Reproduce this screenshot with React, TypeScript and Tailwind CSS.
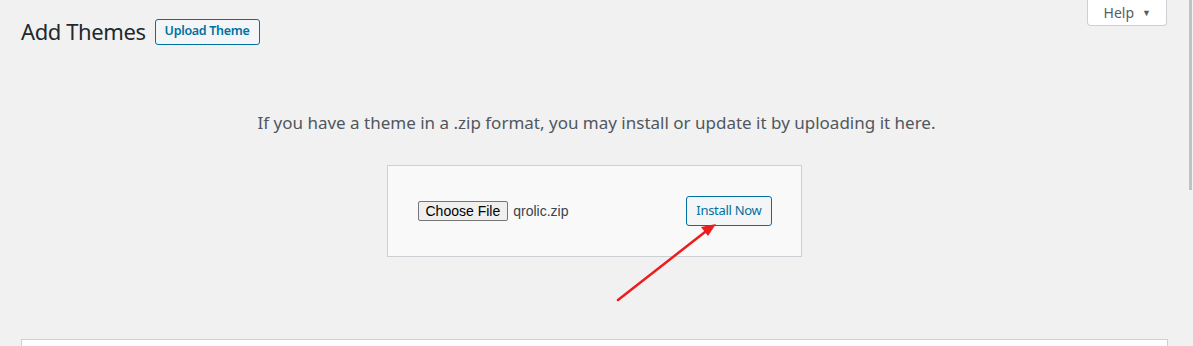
import React from 'react';

const App: React.FC = () => {
  return (
    <div className="relative w-[1193px] h-[346px] overflow-hidden bg-[#f1f1f1] font-['Noto_Sans',sans-serif] text-[#23282d]">
      {/* scrollbar */}
      <div className="absolute right-[1px] top-0 w-[3px] h-[190px] bg-[#c1c1c1]" />

      <div className="flex justify-end pr-[26px]">
        <button className="flex items-center gap-[8px] h-[26px] pl-[16px] pr-[15px] bg-white border border-t-0 border-[#ccd0d4] rounded-b-[4px] text-[14px] text-[#555d66]">
          Help
          <span className="text-[9px] leading-none">▼</span>
        </button>
      </div>

      <div className="flex items-center gap-[9px] pl-[21px] -mt-[9px]">
        <h1 className="text-[22px] leading-[29px] tracking-[-0.4px] font-normal text-[#23282d]">Add Themes</h1>
        <button className="h-[26px] px-[9px] text-[12.5px] tracking-[-0.3px] font-semibold text-[#0071a1] bg-[#f3f5f6] border border-[#0071a1] rounded-[3px]">
          Upload Theme
        </button>
      </div>

      <p className="mt-[66px] text-center text-[17px] leading-[22px] text-[#50575e]">
        If you have a theme in a .zip format, you may install or update it by uploading it here.
      </p>

      <div className="flex justify-center mt-[31px] pr-[5px]">
        <div className="w-[415px] h-[92px] bg-[#f9f9f9] border border-[#ccd0d4] flex items-center justify-between pl-[30px] pr-[29px]">
          <div className="flex items-center gap-[5px] font-['Liberation_Sans',Arial,sans-serif]">
            <span className="h-[20px] px-[7px] flex items-center bg-[#efefef] border border-[#767676] rounded-[2px] text-[14px] text-black">
              Choose File
            </span>
            <span className="text-[14px] text-[#3c434a]">qrolic.zip</span>
          </div>
          <button className="h-[30px] px-[9px] text-[13px] tracking-[-0.3px] text-[#0071a1] bg-[#f3f5f6] border border-[#0071a1] rounded-[3px]">
            Install Now
          </button>
        </div>
      </div>

      <div className="mt-[82px] ml-[21px] mr-[25px] h-[20px] bg-white border border-[#ccd0d4]" />

      <svg className="absolute left-0 top-0" width="1193" height="346" viewBox="0 0 1193 346">
        <line x1="618" y1="300" x2="705" y2="232" stroke="#ee1c1c" strokeWidth="2.5" strokeLinecap="round" />
        <polygon points="716,224 701,227 708,236" fill="#ee1c1c" />
      </svg>
    </div>
  );
};

export default App;
